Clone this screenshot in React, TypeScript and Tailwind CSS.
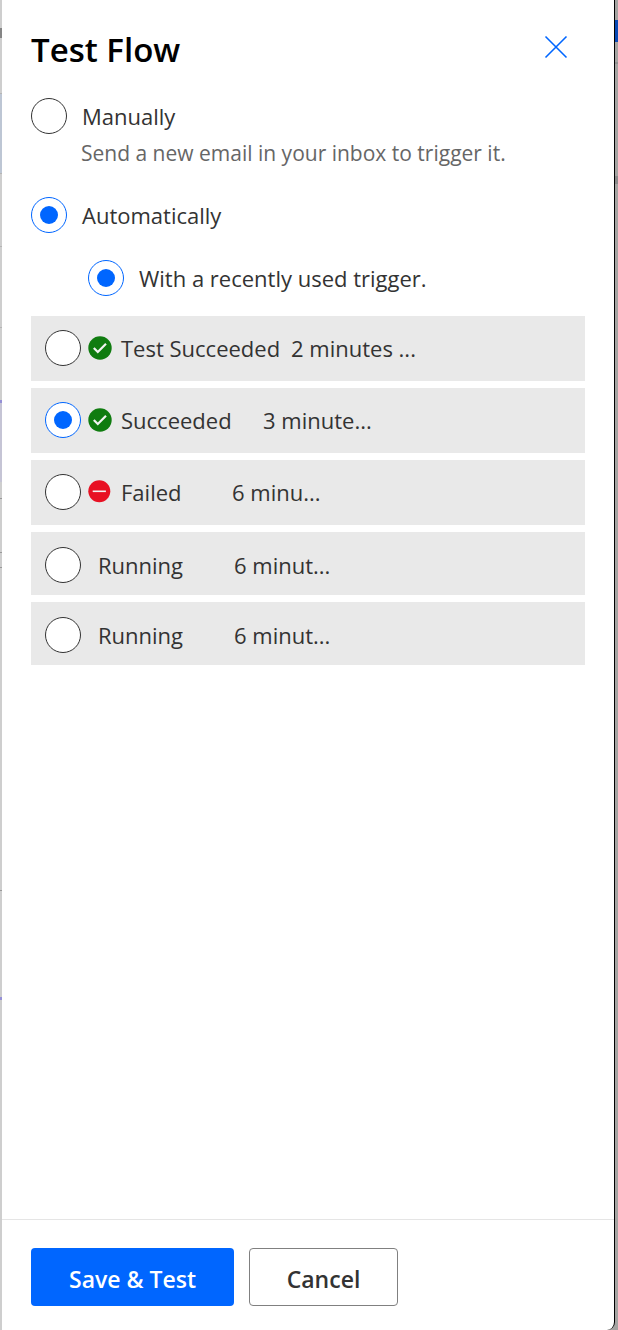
import React, { useState } from "react";

type Run = {
  id: string;
  icon: "success" | "failed" | null;
  status: string;
  time: string;
  statusWidth: string;
};

const runs: Run[] = [
  { id: "run-1", icon: "success", status: "Test Succeeded", time: "2 minutes ...", statusWidth: "w-[170px]" },
  { id: "run-2", icon: "success", status: "Succeeded", time: "3 minute...", statusWidth: "w-[142px]" },
  { id: "run-3", icon: "failed", status: "Failed", time: "6 minu...", statusWidth: "w-[111px]" },
  { id: "run-4", icon: null, status: "Running", time: "6 minut...", statusWidth: "w-[136px]" },
  { id: "run-5", icon: null, status: "Running", time: "6 minut...", statusWidth: "w-[136px]" },
];

const radioClass =
  "grid size-9 shrink-0 appearance-none place-items-center rounded-full border border-[#333333] bg-white checked:border-[#0066ff] checked:before:size-[18px] checked:before:rounded-full checked:before:bg-[#0066ff] checked:before:content-['']";

const SuccessIcon = () => (
  <svg className="size-6 shrink-0" viewBox="0 0 24 24" aria-hidden="true">
    <circle cx="12" cy="12" r="11.7" fill="#107c10" />
    <path d="M5.8 12l4 4L18 7.8" fill="none" stroke="#f3f3f3" strokeWidth="2.2" />
  </svg>
);

const FailedIcon = () => (
  <svg className="size-6 shrink-0" viewBox="0 0 24 24" aria-hidden="true">
    <circle cx="11.3" cy="11.3" r="11" fill="#e81123" />
    <path d="M4.7 11.3h13.2" stroke="#f3f3f3" strokeWidth="1.6" />
  </svg>
);

// slivers of the page behind the panel
const LeftBackdrop = () => (
  <div className="flex w-0.5 shrink-0 flex-col bg-[#cecece]" aria-hidden="true">
    <div className="h-7" />
    <div className="h-2.5 bg-[#858585]" />
    <div className="h-[55px]" />
    <div className="h-20 border-t border-[#b5b5b5] bg-[#bdc6d4]" />
    <div className="h-[73px] border-t border-[#b5b5b5]" />
    <div className="h-[81px] border-t border-[#b5b5b5]" />
    <div className="h-[73px] border-t border-[#b5b5b5]" />
    <div className="h-[82px] border-t-3 border-[#9590d6] bg-[#c5c4d5]" />
    <div className="h-4" />
    <div className="h-[54px] border-t border-[#999999]" />
    <div className="h-[15px] border-t border-[#999999]" />
    <div className="h-[323px] border-t border-[#999999]" />
    <div className="h-[107px] border-t border-[#999999]" />
    <div className="flex-1 border-t-3 border-[#9590d6]" />
  </div>
);

const RightBackdrop = () => (
  <div className="flex w-[3px] shrink-0 flex-col" aria-hidden="true">
    <div className="h-5" />
    <div className="h-[22px] bg-[#0a4ab5]" />
    <div className="h-5" />
    <div className="h-[114px] border-t-2 border-[#929292]" />
    <div className="h-2 bg-[#8b8b8b]" />
  </div>
);

const App = () => {
  const [mode, setMode] = useState("automatically");
  const [selectedRun, setSelectedRun] = useState("run-2");

  return (
    <div className="flex min-h-screen w-full bg-[#a5a4a2] font-['Open_Sans','Noto_Sans',sans-serif] text-[22px] leading-[30px] text-[#333333]">
      <LeftBackdrop />
      <main className="flex min-w-0 flex-1 flex-col rounded-br-lg border-r border-black bg-white">
        <header className="flex items-start justify-between pt-7 pr-[46px] pl-[29px]">
          <h1 className="text-[33px] leading-[44px] font-semibold text-black">
            Test Flow
          </h1>
          <button type="button" aria-label="Close" className="pt-[7px]">
            <svg className="size-6" viewBox="0 0 24 24" fill="none" stroke="#0066ff" strokeWidth="1.6">
              <path d="M1.5 1.5l21 21M22.5 1.5l-21 21" />
            </svg>
          </button>
        </header>

        <section className="flex-1 pt-[26px] pr-[29px] pl-[29px]">
          <label className="flex items-center gap-[15px]">
            <input
              type="radio"
              name="mode"
              className={radioClass}
              checked={mode === "manually"}
              onChange={() => setMode("manually")}
              aria-describedby="manual-hint"
            />
            <span>Manually</span>
          </label>
          <p id="manual-hint" className="pt-1 pl-[50px] text-[21px] leading-[30px] text-[#666666]">
            Send a new email in your inbox to trigger it.
          </p>

          <label className="mt-[29px] flex items-center gap-[15px]">
            <input
              type="radio"
              name="mode"
              className={radioClass}
              checked={mode === "automatically"}
              onChange={() => setMode("automatically")}
            />
            <span>Automatically</span>
          </label>

          <label className="mt-[27px] ml-[57px] flex items-center gap-[15px]">
            <input type="radio" name="trigger" className={radioClass} defaultChecked />
            <span>With a recently used trigger.</span>
          </label>

          <ul className="mt-5 flex flex-col gap-[7px]">
            {runs.map((run) => (
              <li key={run.id} className="bg-[#e9e9e9]">
                <label
                  className={
                    run.icon
                      ? "flex items-center px-[14px] pt-[14px] pb-[15px]"
                      : "flex items-center px-[14px] pt-[15px] pb-3"
                  }
                >
                  <input
                    type="radio"
                    name="run"
                    className={radioClass}
                    checked={selectedRun === run.id}
                    onChange={() => setSelectedRun(run.id)}
                  />
                  <span className={run.icon ? "flex items-center gap-[9px] pl-[7px]" : "flex pl-[17px]"}>
                    {run.icon === "success" && <SuccessIcon />}
                    {run.icon === "failed" && <FailedIcon />}
                    <span className={run.statusWidth}>{run.status}</span>
                  </span>
                  <span>{run.time}</span>
                </label>
              </li>
            ))}
          </ul>
        </section>

        <footer className="flex gap-[15px] border-t border-[#e5e5e5] px-[29px] pt-7 pb-6 text-[23px] font-semibold">
          <button
            type="button"
            className="h-[58px] w-[203px] rounded-[4px] bg-[#0066ff] pt-1 text-white"
          >
            Save &amp; Test
          </button>
          <button
            type="button"
            className="h-[58px] w-[149px] rounded-[4px] border border-[#808080] bg-white pt-1"
          >
            Cancel
          </button>
        </footer>
      </main>
      <RightBackdrop />
    </div>
  );
};

export default App;
